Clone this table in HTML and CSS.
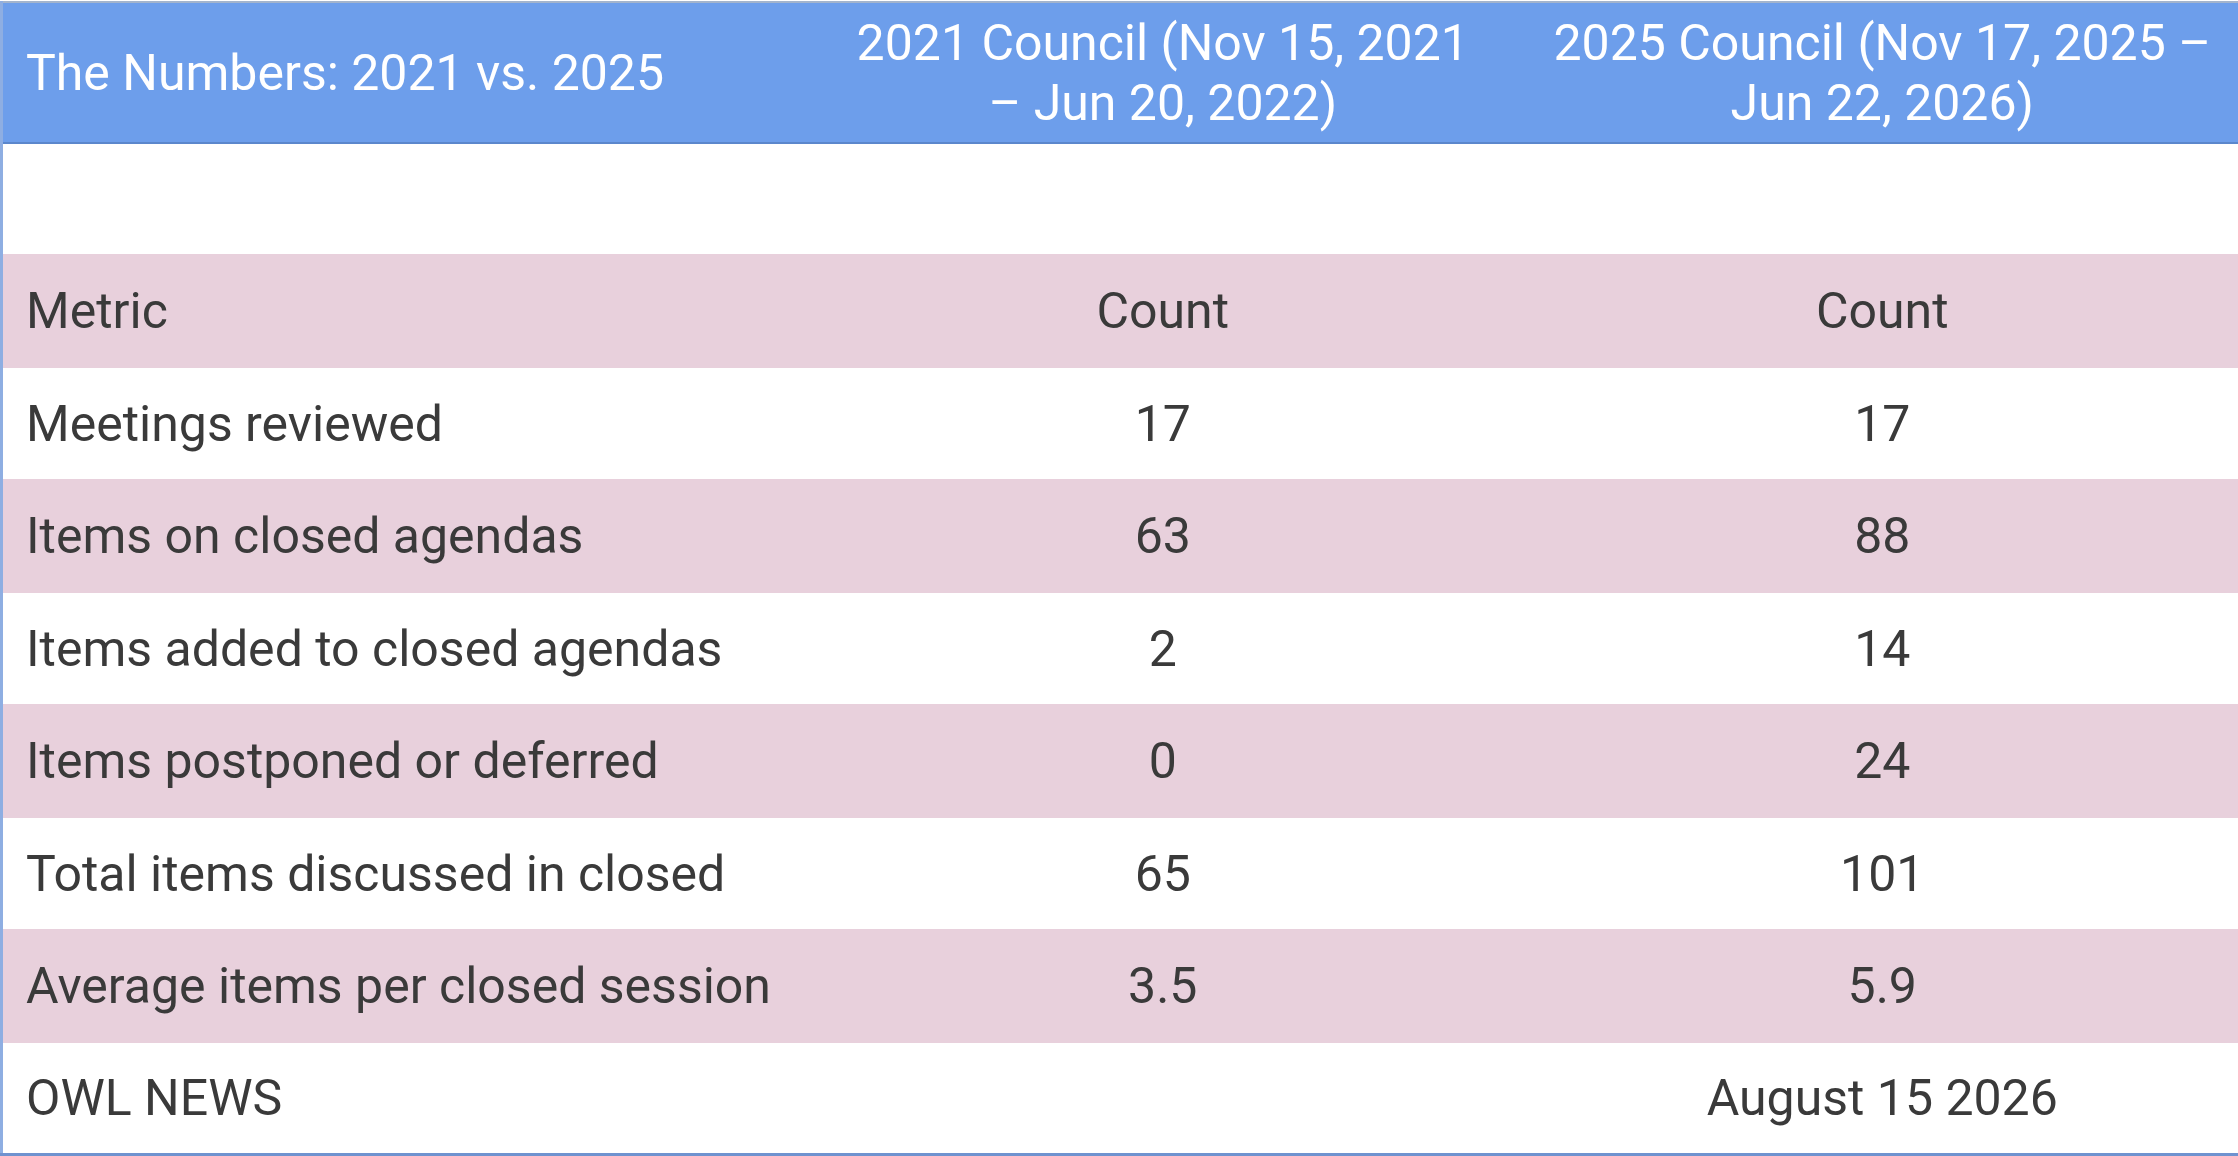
FILE: index.html
```html
<!DOCTYPE html>
<html lang="en">
<head>
<meta charset="utf-8">
<title>The Numbers: 2021 vs. 2025</title>
<link rel="stylesheet" href="styles.css">
</head>
<body>
<div class="sheet">
  <table class="numbers">
    <colgroup>
      <col class="col-metric">
      <col class="col-2021">
      <col class="col-2025">
    </colgroup>
    <thead>
      <tr class="head-row">
        <th class="left">The Numbers: 2021 vs. 2025</th>
        <th>2021 Council (Nov 15, 2021<br>– Jun 20, 2022)</th>
        <th>2025 Council (Nov 17, 2025 –<br>Jun 22, 2026)</th>
      </tr>
    </thead>
    <tbody>
      <tr class="blank-row"><td></td><td></td><td></td></tr>
      <tr class="pink"><td class="left">Metric</td><td>Count</td><td>Count</td></tr>
      <tr class="white"><td class="left">Meetings reviewed</td><td>17</td><td>17</td></tr>
      <tr class="pink"><td class="left">Items on closed agendas</td><td>63</td><td>88</td></tr>
      <tr class="white"><td class="left">Items added to closed agendas</td><td>2</td><td>14</td></tr>
      <tr class="pink"><td class="left">Items postponed or deferred</td><td>0</td><td>24</td></tr>
      <tr class="white"><td class="left">Total items discussed in closed</td><td>65</td><td>101</td></tr>
      <tr class="pink"><td class="left">Average items per closed session</td><td>3.5</td><td>5.9</td></tr>
      <tr class="white"><td class="left">OWL NEWS</td><td></td><td>August 15 2026</td></tr>
    </tbody>
  </table>
</div>
</body>
</html>
```

FILE: styles.css
```css
html, body {
  margin: 0;
  padding: 0;
  background: #ffffff;
}

body {
  font-family: Roboto, "Liberation Sans", Arial, sans-serif;
  width: 2238px;
  height: 1156px;
  overflow: hidden;
}

.sheet {
  padding-top: 1px;
}

.numbers {
  width: 2238px;
  table-layout: fixed;
  border-collapse: collapse;
  border-top: 2px solid #a3b4cc;
  border-left: 3px solid #8eaee2;
  border-bottom: 3px solid #6f92cf;
}

.col-metric { width: 797px; }
.col-2021 { width: 727px; }
.col-2025 { width: 711px; }

.numbers th,
.numbers td {
  padding: 0 20px;
  text-align: center;
  vertical-align: middle;
  font-size: 50px;
  line-height: 60px;
  color: #3a3a3a;
  font-weight: 400;
  white-space: nowrap;
}

.numbers .left {
  text-align: left;
  padding-left: 23px;
}

.head-row {
  height: 141px;
  background: #6d9eeb;
  border-bottom: 2px solid #5b87cc;
}

.head-row th {
  color: #ffffff;
}

.blank-row {
  height: 111px;
  background: #ffffff;
}

.pink {
  height: 114px;
  background: #e8d0dc;
}

.white {
  height: 111px;
  background: #ffffff;
}
```
